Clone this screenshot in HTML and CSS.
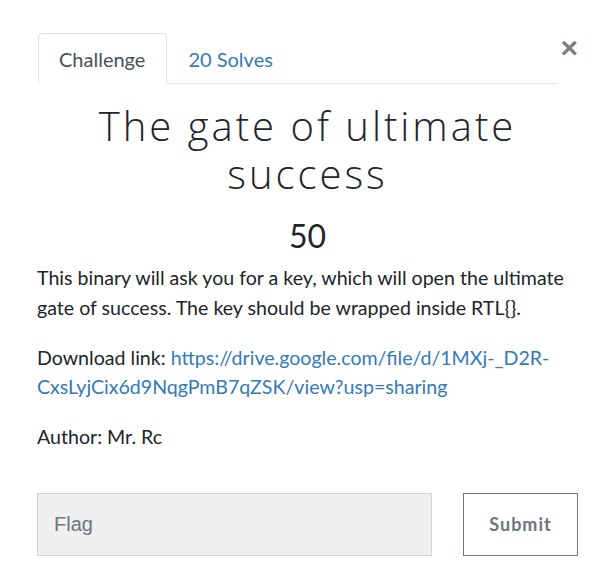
FILE: index.html
```html
<!DOCTYPE html>
<html lang="en">
<head>
<meta charset="utf-8">
<title>Challenge</title>
<link rel="stylesheet" href="styles.css">
</head>
<body>
<div class="modal">
  <div class="header">
    <nav class="tabs">
      <a class="tab active" href="#">Challenge</a>
      <a class="tab" href="#">20 Solves</a>
    </nav>
    <button class="close" type="button">&times;</button>
  </div>
  <h2 class="title">The gate of ultimate success</h2>
  <h3 class="value">50</h3>
  <div class="desc">
    <p>This binary will ask you for a key, which will open the ultimate gate of success. The key should be wrapped inside RTL{}.</p>
    <p>Download link: <a href="#">https://drive.google.com/file/d/1MXj-_D2R-CxsLyjCix6d9NqgPmB7qZSK/view?usp=sharing</a></p>
    <p>Author: Mr. Rc</p>
  </div>
  <form class="submit-row">
    <input class="flag" type="text" placeholder="Flag">
    <button class="submit" type="button">Submit</button>
  </form>
</div>
</body>
</html>
```
FILE: styles.css
```css
html, body {
  margin: 0;
  padding: 0;
  background: #ffffff;
}
body {
  font-family: Lato, "Liberation Sans", sans-serif;
  color: #212529;
}
.modal {
  padding: 33px 35px 0 37px;
}
.header {
  display: flex;
  align-items: flex-start;
}
.tabs {
  flex: 1;
  display: flex;
  border-bottom: 1px solid #dee2e6;
  margin-left: 1px;
}
.tab {
  display: block;
  padding: 13px 21px 12px 20px;
  font-size: 20px;
  line-height: 24px;
  color: #337ab7;
  text-decoration: none;
  border: 1px solid transparent;
  border-top-left-radius: 4px;
  border-top-right-radius: 4px;
  margin-bottom: -1px;
}
.tab.active {
  color: #495057;
  background: #fff;
  border-color: #dee2e6 #dee2e6 #fff;
}
.close {
  background: none;
  border: 0;
  padding: 0;
  margin: 3px 0 0 2px;
  font-family: "Liberation Sans", sans-serif;
  font-size: 30px;
  line-height: 24px;
  font-weight: 700;
  color: #7d7d7d;
  cursor: pointer;
}
.title {
  margin: 18px 0 0;
  text-align: center;
  font-family: "Open Sans", sans-serif;
  font-weight: 300;
  font-size: 40px;
  line-height: 48px;
  letter-spacing: 3px;
  color: #212529;
}
.value {
  margin: 19px 0 0;
  text-align: center;
  font-weight: 400;
  font-size: 32px;
  line-height: 38px;
}
.desc {
  margin-top: 8px;
  font-size: 19.6px;
  line-height: 29.5px;
}
.desc p {
  margin: 0 0 20.5px;
}
.desc p:last-child {
  margin-bottom: 0;
}
.desc a {
  color: #337ab7;
  text-decoration: none;
}
.submit-row {
  display: flex;
  gap: 31px;
  margin: 41px 0 0;
}
.flag {
  flex: 1;
  height: 63px;
  box-sizing: border-box;
  margin: 0;
  padding: 0 16px;
  background: #efefef;
  border: 1px solid #ced4da;
  font-family: "Liberation Sans", sans-serif;
  font-size: 20px;
  color: #495057;
}
.flag::placeholder {
  color: #6c757d;
}
.submit {
  width: 115px;
  height: 63px;
  box-sizing: border-box;
  margin: 0;
  background: #fff;
  border: 1px solid #6c757d;
  font-family: Lato, sans-serif;
  font-weight: 700;
  font-size: 18px;
  letter-spacing: 1px;
  color: #6c757d;
}
```
